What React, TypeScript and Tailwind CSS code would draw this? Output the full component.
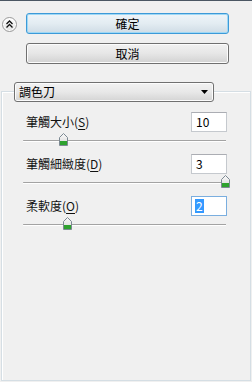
import React from "react";

const FONT = "font-['Noto_Sans_CJK_TC','Liberation_Sans',sans-serif]";

function Thumb() {
  return (
    <svg width="9" height="13" viewBox="0 0 9 13">
      <defs>
        <linearGradient id="thg" x1="0" y1="0" x2="0" y2="1">
          <stop offset="0" stopColor="#fafafa" />
          <stop offset="1" stopColor="#d6d6d6" />
        </linearGradient>
      </defs>
      <path d="M4.5 0.5 L8.5 4.5 L8.5 12.5 L0.5 12.5 L0.5 4.5 Z" fill="url(#thg)" stroke="#7c8993" />
      <rect x="1" y="8" width="7" height="4" fill="#2ea22e" />
    </svg>
  );
}

function Slider({ frac }: { frac: number }) {
  const len = 203;
  const center = 3 + frac * (len - 4);
  return (
    <div className="relative h-[22px] -ml-[3px] w-[203px]">
      <div className="mt-[8px] h-[1px] bg-[#a3a3a3] rounded-l-full" />
      <div className="h-[1px] bg-white" />
      <div className="absolute top-[1px]" style={{ left: center - 4.5 }}>
        <Thumb />
      </div>
    </div>
  );
}

function Row({
  label,
  mnemonic,
  value,
  frac,
  focused,
}: {
  label: string;
  mnemonic: string;
  value: string;
  frac: number;
  focused?: boolean;
}) {
  return (
    <div className="flex flex-col">
      <div className="flex h-[20px] items-center justify-between">
        <span className="text-[12px] leading-[14px] text-[#111]">
          {label}(<span className="underline underline-offset-2">{mnemonic}</span>)
        </span>
        <div
          className={
            "flex h-[20px] w-[36px] items-center bg-white pl-[3px] text-[12px] leading-[14px] border " +
            (focused ? "border-[#7aaedf]" : "border-[#c5c9ce] border-t-[#abadb3]")
          }
        >
          {focused ? (
            <span className="bg-[#3399ff] px-[1px] text-white">{value}</span>
          ) : (
            <span className="px-[1px] text-black">{value}</span>
          )}
        </div>
      </div>
      <Slider frac={frac} />
    </div>
  );
}

export default function App() {
  return (
    <div
      className={`${FONT} relative h-[382px] w-[252px] overflow-hidden border-t border-[#4b5663] bg-[#f0f0f0] text-black`}
    >
      <div className="flex pl-[2px] pt-[12px]">
        <div className="mt-[4px] flex h-[15px] w-[15px] items-center justify-center rounded-full border border-[#9a9a9a] bg-gradient-to-b from-white to-[#e2e2e2] shadow-[inset_0_0_0_1px_#fff]">
          <svg width="9" height="9" viewBox="0 0 9 9">
            <path d="M1.5 4 L4.5 1 L7.5 4" fill="none" stroke="#111" strokeWidth="1.3" />
            <path d="M1.5 7.5 L4.5 4.5 L7.5 7.5" fill="none" stroke="#111" strokeWidth="1.3" />
          </svg>
        </div>
        <div className="ml-[9px] flex w-[203px] flex-col gap-[9px]">
          <div className="flex h-[21px] items-center justify-center rounded-[3px] border border-[#3c9ad8] bg-gradient-to-b from-[#eef5f9] via-[#e3ecf2] to-[#cfdce5] text-[12px] shadow-[inset_0_0_0_1px_#9fd8f5]">
            確定
          </div>
          <div className="flex h-[21px] items-center justify-center rounded-[3px] border border-[#707070] bg-gradient-to-b from-[#f2f2f2] via-[#e6e6e6] to-[#d2d2d2] text-[12px] shadow-[inset_0_0_0_1px_#fcfcfc]">
            取消
          </div>
        </div>
      </div>

      <div className="mt-[27px] ml-[1px] h-[290px] w-[250px] border border-[#d5dee4] shadow-[inset_1px_1px_0_#ffffff]">
        <div className="-mt-[10px] ml-[12px] flex h-[20px] w-[200px] items-center justify-between rounded-[3px] border border-[#707070] bg-gradient-to-b from-[#f2f2f2] via-[#e8e8e8] to-[#d4d4d4] pl-[4px] pr-[5px] text-[12px] shadow-[inset_0_0_0_1px_#fcfcfc]">
          <span>調色刀</span>
          <svg width="7" height="4" viewBox="0 0 7 4">
            <path d="M0 0 L7 0 L3.5 4 Z" fill="#000" />
          </svg>
        </div>
        <div className="mt-[10px] flex flex-col pl-[24px] pr-[23px]">
          <Row label="筆觸大小" mnemonic="S" value="10" frac={0.19} />
          <Row label="筆觸細緻度" mnemonic="D" value="3" frac={1} />
          <Row label="柔軟度" mnemonic="O" value="2" frac={0.21} focused />
        </div>
      </div>
    </div>
  );
}
